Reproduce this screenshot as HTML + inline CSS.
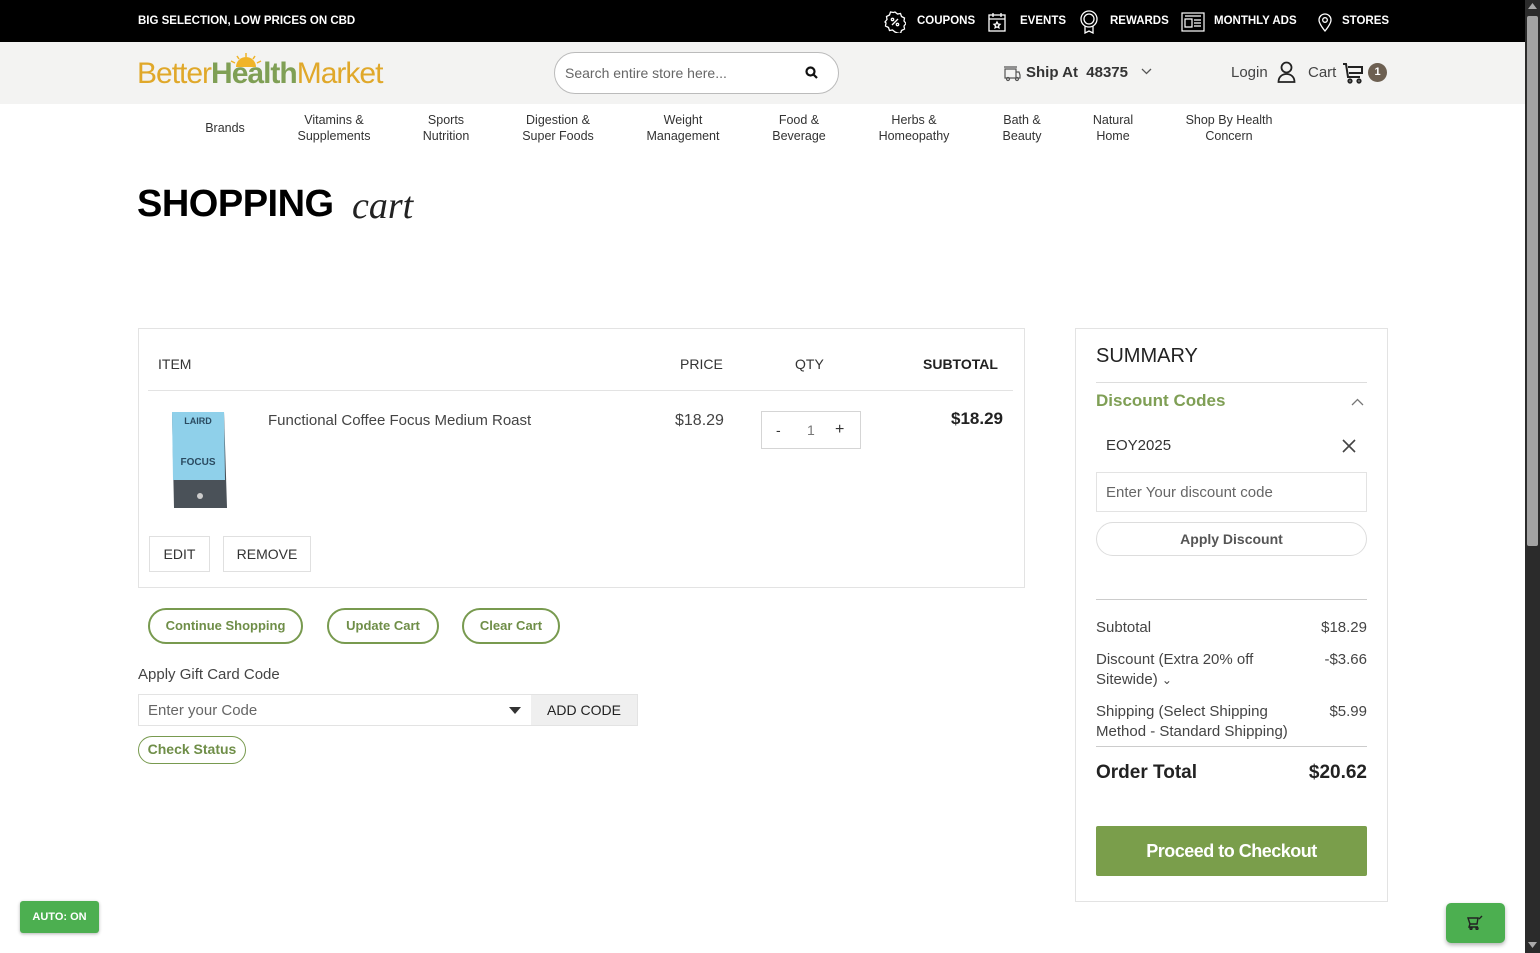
<!DOCTYPE html>
<html><head><meta charset="utf-8"><style>
*{box-sizing:border-box;margin:0;padding:0}
body{width:1540px;height:953px;overflow:hidden;background:#fff;font-family:"Liberation Sans",Arial,sans-serif;color:#333;position:relative}
.abs{position:absolute}
.top{position:absolute;left:0;top:0;width:1525px;height:42px;background:#000;color:#fff;font-size:11.5px;font-weight:bold}
.hdr{position:absolute;left:0;top:42px;width:1525px;height:62px;background:#f3f3f2}
.nav div{position:absolute;top:112px;font-size:12.5px;color:#333;text-align:center;line-height:16px;transform:translateX(-50%);white-space:nowrap}
.btn{position:absolute;border:2px solid #789a4f;border-radius:18px;color:#6f8e48;font-weight:bold;font-size:13px;text-align:center}
.sb{position:absolute;right:0;top:0;width:15px;height:953px;background:#2b2b2b}
</style></head><body>
<div class="top">
 <div class="abs" style="left:138px;top:15px">BIG SELECTION, LOW PRICES ON CBD</div>
 <svg class="abs" style="left:884px;top:11px" width="22" height="22" viewBox="0 0 22 22" fill="none" stroke="#fff" stroke-width="1.3"><path d="M11 1l2.5 2 3-.5 1 3 3 1.5-.5 3 2 2.5-2 2.5.5 3-3 1.5-1 3-3-.5L11 21l-2.5-2-3 .5-1-3-3-1.5.5-3L1 11l2-2.5-.5-3 3-1.5 1-3 3 .5z"/><path d="M8 14l6-6"/><circle cx="8.5" cy="8.5" r="1.2"/><circle cx="13.5" cy="13.5" r="1.2"/></svg>
 <div class="abs" style="left:917px;top:15px">COUPONS</div>
 <svg class="abs" style="left:988px;top:12px" width="18" height="20" viewBox="0 0 18 20" fill="none" stroke="#fff" stroke-width="1.3"><rect x="1" y="3" width="16" height="16"/><path d="M1 7h16M5 1v4M13 1v4M9 10l1 2 2 .3-1.5 1.5.4 2L9 14.8 7.1 15.8l.4-2L6 12.3 8 12z"/></svg>
 <div class="abs" style="left:1020px;top:15px">EVENTS</div>
 <svg class="abs" style="left:1079px;top:10px" width="20" height="24" viewBox="0 0 20 24" fill="none" stroke="#fff" stroke-width="1.3"><circle cx="10" cy="9" r="8"/><circle cx="10" cy="9" r="5"/><path d="M6 16v7l4-2 4 2v-7"/></svg>
 <div class="abs" style="left:1110px;top:15px">REWARDS</div>
 <svg class="abs" style="left:1181px;top:12px" width="24" height="20" viewBox="0 0 24 20" fill="none" stroke="#fff" stroke-width="1.2"><rect x="1" y="1" width="22" height="18"/><path d="M4 4h16M4 7h7v8H4zM13 8h7M13 11h7M13 14h7"/></svg>
 <div class="abs" style="left:1214px;top:15px">MONTHLY ADS</div>
 <svg class="abs" style="left:1317px;top:12px" width="16" height="20" viewBox="0 0 16 20" fill="none" stroke="#fff" stroke-width="1.3"><path d="M8 19s-6-7-6-11a6 6 0 0112 0c0 4-6 11-6 11z"/><circle cx="8" cy="8" r="2.3"/></svg>
 <div class="abs" style="left:1342px;top:15px">STORES</div>
</div>
<div class="hdr">
 <div class="abs" style="left:137px;top:15px;font-size:30px;letter-spacing:-1px;line-height:34px;white-space:nowrap"><span style="color:#e0a82a">Better</span><span style="color:#7f9f55;font-weight:bold">Health</span><span style="color:#e0a82a">Market</span></div>
 <svg class="abs" style="left:228px;top:11px" width="36" height="14" viewBox="0 0 36 14"><path d="M8 14a10 10 0 0120 0z" fill="#f0b428"/><g stroke="#f0b428" stroke-width="1.5"><path d="M18 0v4M9 3l2 3M27 3l-2 3M3 8l4 2M33 8l-4 2"/></g></svg>
 <div class="abs" style="left:554px;top:10px;width:285px;height:42px;border:1px solid #bbb;border-radius:21px;background:#fff"></div>
 <div class="abs" style="left:565px;top:23px;font-size:14px;color:#666">Search entire store here...</div>
 <svg class="abs" style="left:805px;top:24px" width="13" height="13" viewBox="0 0 13 13" fill="none" stroke="#111" stroke-width="2.2"><circle cx="5.5" cy="5.5" r="4"/><path d="M8.5 8.5l3.5 3.5"/></svg>
 <svg class="abs" style="left:1002px;top:22px" width="19" height="18" viewBox="0 0 19 18" fill="none" stroke="#555" stroke-width="1.2"><path d="M3 5h11v9H3zM14 8h3l1 3v3h-4M2 3h13"/><circle cx="6" cy="15" r="1.5"/><circle cx="15" cy="15" r="1.5"/></svg>
 <div class="abs" style="left:1026px;top:22px;font-size:15px;font-weight:bold;color:#333">Ship At &nbsp;48375</div>
 <svg class="abs" style="left:1141px;top:26px" width="11" height="7" viewBox="0 0 11 7" fill="none" stroke="#555" stroke-width="1.3"><path d="M1 1l4.5 4.5L10 1"/></svg>
 <div class="abs" style="left:1231px;top:22px;font-size:15px;color:#444">Login</div>
 <svg class="abs" style="left:1277px;top:19px" width="19" height="22" viewBox="0 0 19 22" fill="none" stroke="#222" stroke-width="1.8"><circle cx="9.5" cy="6.5" r="5"/><path d="M1.5 21c0-5 3.5-8 8-8s8 3 8 8z"/></svg>
 <div class="abs" style="left:1308px;top:22px;font-size:15px;color:#444">Cart</div>
 <svg class="abs" style="left:1342px;top:20px" width="22" height="22" viewBox="0 0 22 22" fill="none" stroke="#222" stroke-width="2"><path d="M1 2h3l2 13h12M6 5h14v6H7"/><circle cx="8" cy="19" r="1.6"/><circle cx="17" cy="19" r="1.6"/></svg>
 <div class="abs" style="left:1368px;top:21px;width:19px;height:19px;border-radius:50%;background:#6d6052;color:#fff;font-size:11px;font-weight:bold;text-align:center;line-height:19px">1</div>
</div>
<div class="nav">
 <div style="left:225px;top:120px">Brands</div>
 <div style="left:334px">Vitamins &amp;<br>Supplements</div>
 <div style="left:446px">Sports<br>Nutrition</div>
 <div style="left:558px">Digestion &amp;<br>Super Foods</div>
 <div style="left:683px">Weight<br>Management</div>
 <div style="left:799px">Food &amp;<br>Beverage</div>
 <div style="left:914px">Herbs &amp;<br>Homeopathy</div>
 <div style="left:1022px">Bath &amp;<br>Beauty</div>
 <div style="left:1113px">Natural<br>Home</div>
 <div style="left:1229px">Shop By Health<br>Concern</div>
</div>
<div class="abs" style="left:137px;top:183px;font-size:38px;font-weight:900;color:#000;letter-spacing:-0.5px">SHOPPING</div>
<div class="abs" style="left:352px;top:184px;font-size:38px;font-family:'Liberation Serif',cursive;font-style:italic;color:#222">cart</div>

<div class="abs" style="left:138px;top:328px;width:887px;height:260px;border:1px solid #e3e3e3"></div>
<div class="abs" style="left:158px;top:356px;font-size:14px;color:#333">ITEM</div>
<div class="abs" style="left:680px;top:356px;font-size:14px;color:#333">PRICE</div>
<div class="abs" style="left:795px;top:356px;font-size:14px;color:#333">QTY</div>
<div class="abs" style="left:923px;top:356px;font-size:14px;font-weight:bold;color:#222">SUBTOTAL</div>
<div class="abs" style="left:148px;top:390px;width:865px;height:1px;background:#e3e3e3"></div>
<svg class="abs" style="left:165px;top:408px" width="65" height="104" viewBox="0 0 65 104"><path d="M7 4h52l3 96H9z" fill="#4a5158"/><path d="M7 4h52l1 68H8z" fill="#8fd0ea"/><text x="33" y="16" font-size="9" font-weight="bold" fill="#2a4a60" text-anchor="middle" font-family="Liberation Sans">LAIRD</text><text x="33" y="57" font-size="10" font-weight="bold" fill="#2a4a60" text-anchor="middle" font-family="Liberation Sans">FOCUS</text><circle cx="35" cy="88" r="3" fill="#ccc"/></svg>
<div class="abs" style="left:268px;top:412px;font-size:15px;color:#444">Functional Coffee Focus Medium Roast</div>
<div class="abs" style="left:675px;top:412px;font-size:16px;color:#444">$18.29</div>
<div class="abs" style="left:761px;top:411px;width:100px;height:38px;border:1px solid #d5d5d5"></div>
<div class="abs" style="left:776px;top:422px;font-size:14px;color:#333">-</div>
<div class="abs" style="left:807px;top:422px;font-size:14px;color:#777">1</div>
<div class="abs" style="left:835px;top:421px;font-size:16px;color:#333">+</div>
<div class="abs" style="left:948px;top:409px;font-size:17px;font-weight:bold;color:#222;width:55px;text-align:right">$18.29</div>
<div class="abs" style="left:149px;top:536px;width:61px;height:36px;border:1px solid #e0e0e0;font-size:14px;color:#333;text-align:center;line-height:34px">EDIT</div>
<div class="abs" style="left:223px;top:536px;width:88px;height:36px;border:1px solid #e0e0e0;font-size:14px;color:#333;text-align:center;line-height:34px">REMOVE</div>

<div class="btn" style="left:148px;top:608px;width:155px;height:36px;line-height:32px">Continue Shopping</div>
<div class="btn" style="left:327px;top:608px;width:112px;height:36px;line-height:32px">Update Cart</div>
<div class="btn" style="left:462px;top:608px;width:98px;height:36px;line-height:32px">Clear Cart</div>
<div class="abs" style="left:138px;top:666px;font-size:15px;color:#444">Apply Gift Card Code</div>
<div class="abs" style="left:138px;top:694px;width:500px;height:32px;border:1px solid #e3e3e3"></div>
<div class="abs" style="left:148px;top:702px;font-size:15px;color:#666">Enter your Code</div>
<svg class="abs" style="left:509px;top:707px" width="12" height="7"><path d="M0 0h12L6 7z" fill="#333"/></svg>
<div class="abs" style="left:531px;top:695px;width:106px;height:30px;background:#efefef;font-size:14px;color:#222;text-align:center;line-height:30px">ADD CODE</div>
<div class="btn" style="left:138px;top:736px;width:108px;height:28px;line-height:25px;border-width:1px;font-size:14px">Check Status</div>

<div class="abs" style="left:1075px;top:328px;width:313px;height:574px;border:1px solid #e3e3e3"></div>
<div class="abs" style="left:1096px;top:345px;font-size:20px;color:#222">SUMMARY</div>
<div class="abs" style="left:1096px;top:382px;width:271px;height:1px;background:#ddd"></div>
<div class="abs" style="left:1096px;top:391px;font-size:17px;font-weight:bold;color:#7f9f55">Discount Codes</div>
<svg class="abs" style="left:1351px;top:398px" width="13" height="8" fill="none" stroke="#777" stroke-width="1.3"><path d="M1 7l5.5-5.5L12 7"/></svg>
<div class="abs" style="left:1106px;top:437px;font-size:15px;color:#333">EOY2025</div>
<svg class="abs" style="left:1342px;top:439px" width="14" height="14" stroke="#444" stroke-width="1.6"><path d="M1 1l12 12M13 1L1 13"/></svg>
<div class="abs" style="left:1096px;top:472px;width:271px;height:40px;border:1px solid #e3e3e3"></div>
<div class="abs" style="left:1106px;top:484px;font-size:15px;color:#666">Enter Your discount code</div>
<div class="abs" style="left:1096px;top:522px;width:271px;height:34px;border:1px solid #ddd;border-radius:17px;font-size:14px;font-weight:bold;color:#555;text-align:center;line-height:32px">Apply Discount</div>
<div class="abs" style="left:1096px;top:599px;width:271px;height:1px;background:#ccc"></div>
<div class="abs" style="left:1096px;top:618px;font-size:15px;color:#444;line-height:20px">Subtotal</div>
<div class="abs" style="left:1300px;top:618px;width:67px;text-align:right;font-size:15px;color:#444;line-height:20px">$18.29</div>
<div class="abs" style="left:1096px;top:650px;font-size:15px;color:#444;line-height:20px">Discount (Extra 20% off<br>Sitewide) <span style="font-size:12px">&#8964;</span></div>
<div class="abs" style="left:1300px;top:650px;width:67px;text-align:right;font-size:15px;color:#444;line-height:20px">-$3.66</div>
<div class="abs" style="left:1096px;top:702px;font-size:15px;color:#444;line-height:20px">Shipping (Select Shipping<br>Method - Standard Shipping)</div>
<div class="abs" style="left:1300px;top:702px;width:67px;text-align:right;font-size:15px;color:#444;line-height:20px">$5.99</div>
<div class="abs" style="left:1096px;top:746px;width:271px;height:1px;background:#ccc"></div>
<div class="abs" style="left:1096px;top:762px;font-size:19px;font-weight:bold;color:#222">Order Total</div>
<div class="abs" style="left:1280px;top:762px;width:87px;text-align:right;font-size:19px;font-weight:bold;color:#222">$20.62</div>
<div class="abs" style="left:1096px;top:826px;width:271px;height:50px;background:#7a9e4b;border-radius:2px;color:#fff;font-size:18px;font-weight:bold;text-align:center;line-height:50px;letter-spacing:-0.5px">Proceed to Checkout</div>

<div class="abs" style="left:20px;top:901px;width:79px;height:32px;background:#4caf50;border-radius:3px;color:#fff;font-size:11px;font-weight:bold;text-align:center;line-height:32px;box-shadow:0 1px 3px rgba(0,0,0,.3)">AUTO: ON</div>
<div class="abs" style="left:1446px;top:903px;width:59px;height:40px;background:#4caf50;border-radius:5px;box-shadow:0 2px 4px rgba(0,0,0,.3)"></div>
<svg class="abs" style="left:1467px;top:915px" width="17" height="15" fill="none" stroke="#222" stroke-width="1.4"><path d="M1 3h10l-1 6H3zM3 9l-1 3h9M12 4l3-3"/><circle cx="4" cy="13.5" r="1"/><circle cx="10" cy="13.5" r="1"/></svg>

<div class="sb"><div style="position:absolute;left:2px;top:16px;width:11px;height:530px;background:#a3a3a3;border-radius:2px"></div>
<svg style="position:absolute;left:3px;top:3px" width="9" height="6"><path d="M0 6L4.5 0 9 6z" fill="#aaa"/></svg>
<svg style="position:absolute;left:3px;top:942px" width="9" height="6"><path d="M0 0h9L4.5 6z" fill="#aaa"/></svg></div>
</body></html>
